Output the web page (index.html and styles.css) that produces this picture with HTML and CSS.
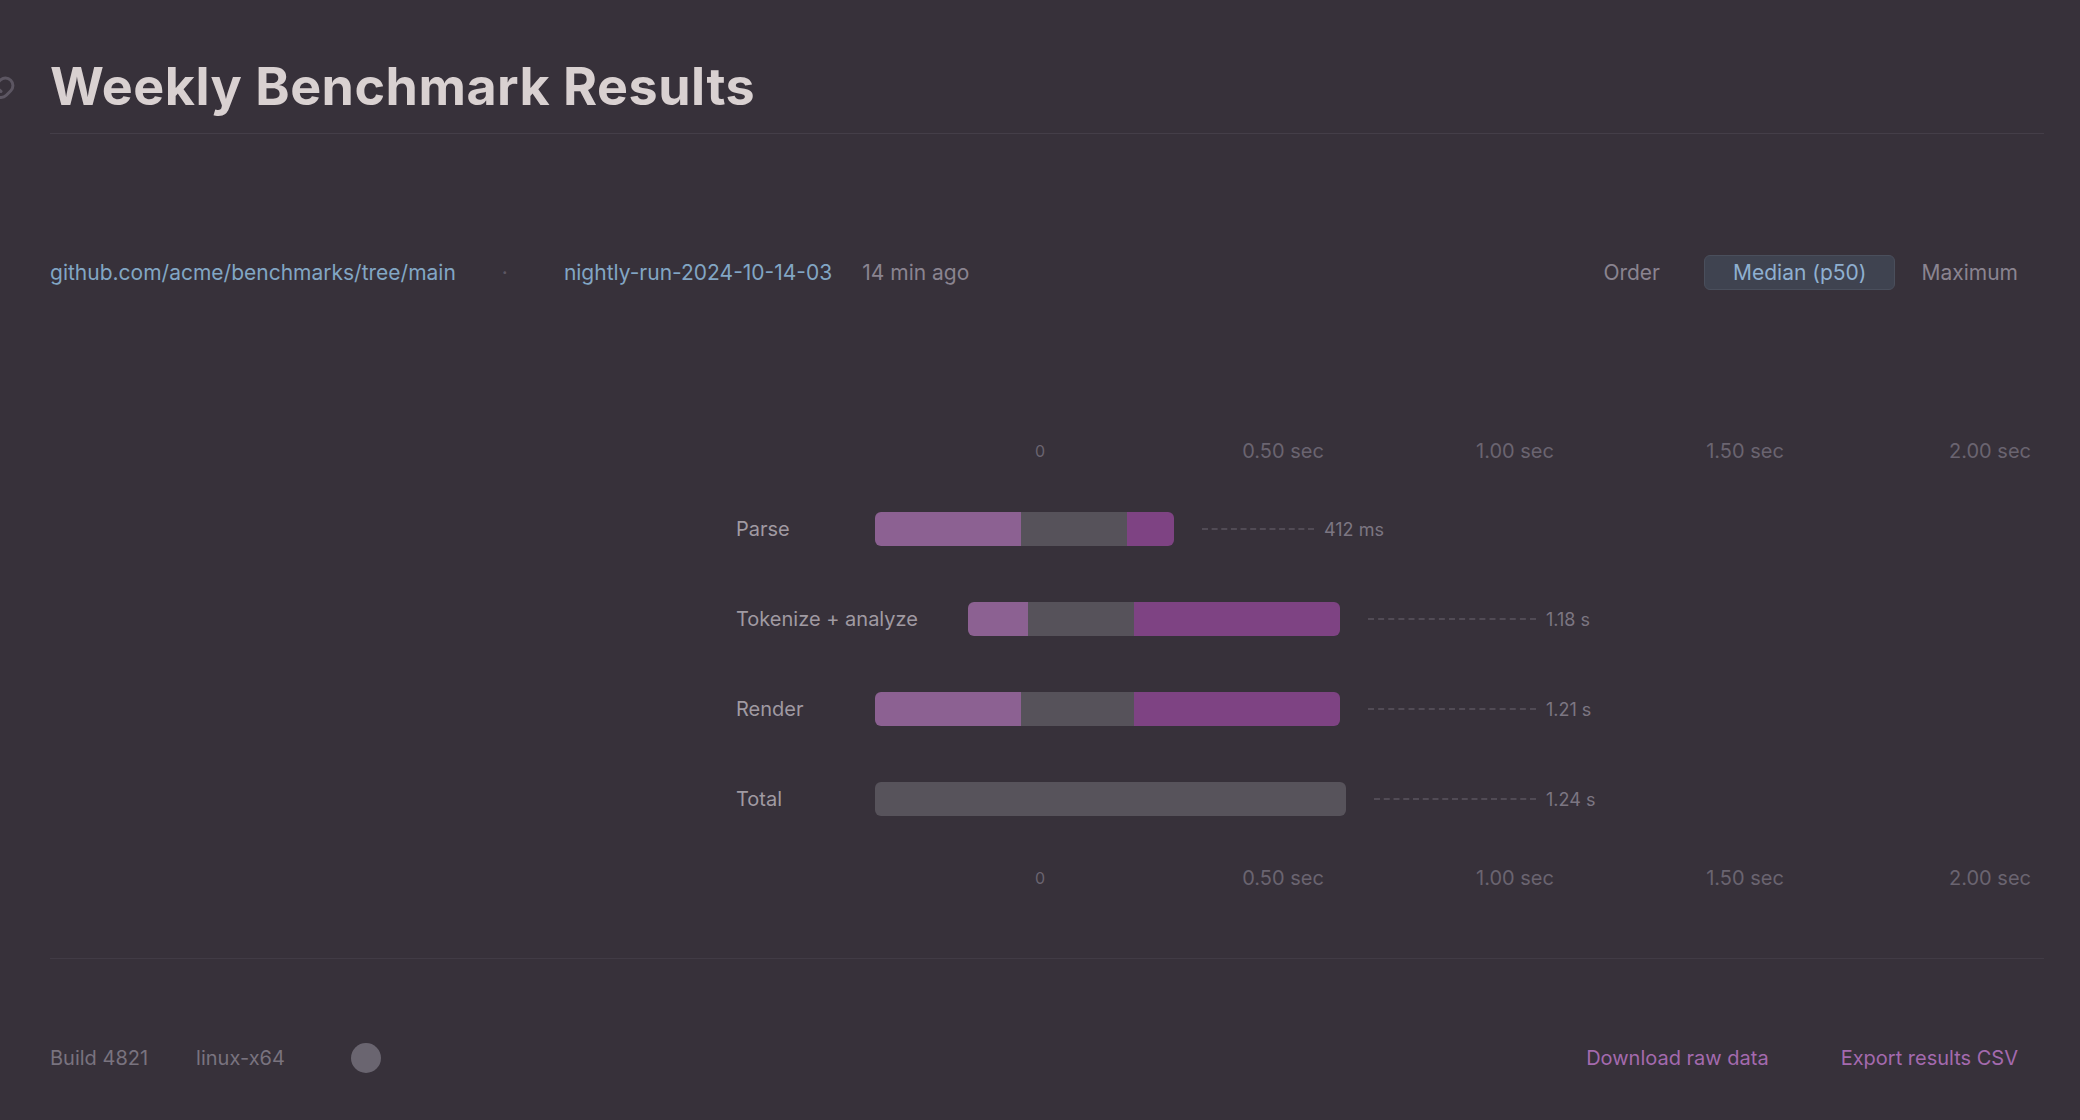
FILE: index.html
```html
<!DOCTYPE html>
<html lang="en">
<head>
<meta charset="utf-8">
<title>Weekly Benchmark Results</title>
<link rel="stylesheet" href="styles.css">
</head>
<body>
<div class="page">
  <header class="header">
    <h1 class="title">
      <a class="anchor" href="#" aria-label="Link to this section">
        <svg viewBox="0 0 24 24" width="36" height="36" fill="none" stroke="currentColor" stroke-width="2" stroke-linecap="round" stroke-linejoin="round"><path d="M10 13a5 5 0 0 0 7.54.54l3-3a5 5 0 0 0-7.07-7.07l-1.72 1.71"/><path d="M14 11a5 5 0 0 0-7.54-.54l-3 3a5 5 0 0 0 7.07 7.07l1.71-1.71"/></svg>
      </a>
      Weekly Benchmark Results
    </h1>
  </header>

  <nav class="nav">
    <div class="nav-left">
      <a class="link" href="#">github.com/acme/benchmarks/tree/main</a>
      <span class="sep">·</span>
      <a class="link second" href="#">nightly-run-2024-10-14-03</a>
      <span class="muted ago">14 min ago</span>
    </div>
    <div class="nav-right">
      <span class="muted">Order</span>
      <button class="pill">Median (p50)</button>
      <span class="muted">Maximum</span>
    </div>
  </nav>

  <section class="chart">
    <div class="axis-row">
      <div class="axis-spacer"></div>
      <div class="axis">
        <span class="tick zero" style="left:165px">0</span>
        <span class="tick" style="left:408px">0.50 sec</span>
        <span class="tick" style="left:640px">1.00 sec</span>
        <span class="tick" style="left:870px">1.50 sec</span>
        <span class="tick" style="left:1115px">2.00 sec</span>
      </div>
    </div>

    <div class="row">
      <div class="label">Parse</div>
      <div class="track">
        <span class="seg a" style="width:146px"></span>
        <span class="seg g" style="width:106px"></span>
        <span class="seg b" style="width:47px"></span>
        <span class="leader" style="width:112px"></span>
        <span class="value">412 ms</span>
      </div>
    </div>
    <div class="row">
      <div class="label">Tokenize + analyze</div>
      <div class="track">
        <span class="seg off" style="width:93px"></span>
        <span class="seg a" style="width:60px"></span>
        <span class="seg g" style="width:106px"></span>
        <span class="seg b" style="width:206px"></span>
        <span class="leader" style="width:168px"></span>
        <span class="value">1.18 s</span>
      </div>
    </div>
    <div class="row">
      <div class="label">Render</div>
      <div class="track">
        <span class="seg a" style="width:146px"></span>
        <span class="seg g" style="width:113px"></span>
        <span class="seg b" style="width:206px"></span>
        <span class="leader" style="width:168px"></span>
        <span class="value">1.21 s</span>
      </div>
    </div>
    <div class="row">
      <div class="label">Total</div>
      <div class="track">
        <span class="seg g total" style="width:471px"></span>
        <span class="leader" style="width:162px"></span>
        <span class="value">1.24 s</span>
      </div>
    </div>

    <div class="axis-row bottom">
      <div class="axis-spacer"></div>
      <div class="axis">
        <span class="tick zero" style="left:165px">0</span>
        <span class="tick" style="left:408px">0.50 sec</span>
        <span class="tick" style="left:640px">1.00 sec</span>
        <span class="tick" style="left:870px">1.50 sec</span>
        <span class="tick" style="left:1115px">2.00 sec</span>
      </div>
    </div>
  </section>

  <footer class="footer">
    <div class="foot-left">
      <span class="faint">Build 4821</span>
      <span class="faint">linux-x64</span>
      <span class="dot" aria-hidden="true"></span>
    </div>
    <div class="foot-right">
      <a class="plink" href="#">Download raw data</a>
      <a class="plink" href="#">Export results CSV</a>
    </div>
  </footer>
</div>
</body>
</html>
```

FILE: styles.css
```css
* { box-sizing: border-box; }
html, body { margin: 0; padding: 0; }
body {
  background: #37313a;
  color: #d8d0d4;
  font-family: Inter, "Noto Sans", "Liberation Sans", sans-serif;
  width: 2080px;
  height: 1120px;
  overflow: hidden;
}
.page {
  padding: 0 62px 0 50px;
}

/* header */
.header {
  padding-top: 55px;
  padding-bottom: 14px;
  border-bottom: 1px solid #443e48;
  margin-right: -26px;
}
.title {
  position: relative;
  margin: 0;
  font-size: 52px;
  line-height: 64px;
  font-weight: 700;
  color: #d9d1d1;
  letter-spacing: 0.5px;
}
.anchor {
  position: absolute;
  left: -70px;
  top: 6px;
  color: #5c5662;
  display: block;
}

/* nav */
.nav {
  margin-top: 119px;
  display: flex;
  justify-content: space-between;
  align-items: center;
  height: 38px;
  font-size: 21px;
}
.nav-left, .nav-right {
  display: flex;
  align-items: center;
}
.link {
  color: #82a6c4;
  text-decoration: none;
}
.sep { color: #5c5662; margin-left: 46px; }
.link.second { margin-left: 56px; }
.ago { margin-left: 30px; }
.muted { color: #8a8490; }
.pill {
  font: inherit;
  color: #8fb0d0;
  background: #3f4350;
  border: 1px solid #4a4f5c;
  border-radius: 6px;
  padding: 4px 28px;
  margin-left: 44px;
  margin-right: 26px;
}

/* chart */
.chart {
  margin-top: 150px;
  margin-left: 686px;
  width: 1308px;
}
.axis-row {
  display: flex;
  height: 20px;
}
.axis-row.bottom { margin-top: 24px; }
.axis-spacer { width: 139px; flex: none; }
.axis {
  position: relative;
  flex: 1;
}
.tick {
  position: absolute;
  top: 0;
  transform: translateX(-50%);
  font-size: 20px;
  line-height: 20px;
  color: #6a6470;
  white-space: nowrap;
}
.tick.zero { font-size: 16px; }
.axis-row + .row { margin-top: 23px; }
.row {
  display: flex;
  align-items: center;
  height: 90px;
}
.label {
  width: 139px;
  flex: none;
  white-space: nowrap;
  font-size: 20px;
  color: #a09aa2;
}
.track {
  display: flex;
  align-items: center;
  flex: 1;
}
.seg {
  display: block;
  height: 34px;
  flex: none;
}
.seg.a { background: #8c6192; border-radius: 6px 0 0 6px; }
.seg.g { background: #56525a; }
.seg.b { background: #7e4383; border-radius: 0 6px 6px 0; }
.seg.off { background: transparent; }
.seg.total { border-radius: 6px; background: #57535b; }
.leader {
  display: block;
  flex: none;
  margin-left: 28px;
  margin-right: 10px;
  border-top: 2px dashed #514b55;
  height: 0;
}
.value {
  font-size: 18px;
  color: #7c7682;
  white-space: nowrap;
}

/* footer */
.footer {
  margin-top: 70px;
  margin-right: -26px;
  border-top: 1px solid #413b45;
  padding-top: 84px;
  padding-right: 26px;
  display: flex;
  justify-content: space-between;
  align-items: center;
  font-size: 20px;
}
.foot-left {
  display: flex;
  align-items: center;
}
.faint { color: #79737f; }
.faint + .faint { margin-left: 48px; }
.dot {
  width: 30px;
  height: 30px;
  border-radius: 50%;
  background: #6a6570;
  margin-left: 66px;
}
.foot-right {
  display: flex;
  gap: 72px;
}
.plink {
  color: #a46aae;
  text-decoration: none;
}
```
